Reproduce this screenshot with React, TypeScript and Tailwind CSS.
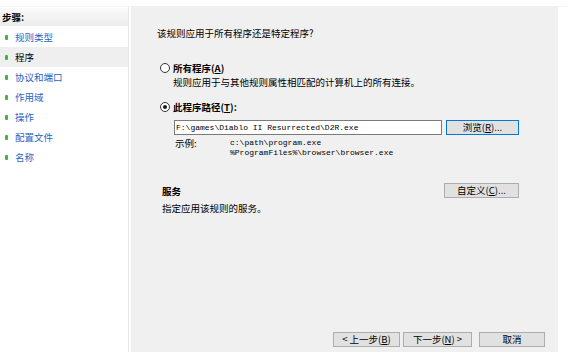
import React from "react";

const steps = ["规则类型", "程序", "协议和端口", "作用域", "操作", "配置文件", "名称"];

function Radio({ checked }: { checked?: boolean }) {
  return (
    <span className="w-[10px] h-[10px] rounded-full border border-[#333333] bg-white flex items-center justify-center shrink-0">
      {checked && <span className="w-[4px] h-[4px] rounded-full bg-[#1a1a1a]" />}
    </span>
  );
}

function Btn({ children, w, blue }: { children: React.ReactNode; w: string; blue?: boolean }) {
  return (
    <div
      className={`${w} h-[15px] flex items-center justify-center bg-[#e1e1e1] border ${
        blue ? "border-[#0078d7]" : "border-[#adadad]"
      } text-[9.5px] leading-[13px] text-black`}
    >
      {children}
    </div>
  );
}

export default function App() {
  return (
    <div className="w-[568px] h-[363px] bg-white text-black text-[9.5px] font-['Noto_Sans_CJK_SC','Noto_Sans',sans-serif] overflow-hidden">
      <div className="h-[7px] border-b border-[#f2f2f2]" />
      <div className="flex h-[345px]">
        {/* left steps panel */}
        <div className="w-[129px] border-r border-[#e6e6e6] bg-white flex flex-col pt-[1px]">
          <div className="h-[18px] flex items-center pl-[2px] font-bold bg-gradient-to-b from-[#fafafa] to-[#ececec]">
            步骤:
          </div>
          <div className="mt-[1px] flex flex-col">
            {steps.map((s, i) => (
              <div
                key={s}
                className={`h-[20px] flex items-center ${i === 1 ? "bg-[#efefef]" : ""}`}
              >
                <span className="ml-[5px] w-[3px] h-[5px] rounded-[1px] bg-[#44b33a]" />
                <span
                  className={`ml-[7px] leading-[12px] ${i === 1 ? "text-black" : "text-[#1f66c4]"}`}
                >
                  {s}
                </span>
              </div>
            ))}
          </div>
        </div>

        {/* main panel */}
        <div className="ml-[2px] w-[427px] h-[345px] bg-[#f0f0f0] flex flex-col pl-[26px]">
          <div className="mt-[20px] h-[12px] leading-[12px]">该规则应用于所有程序还是特定程序?</div>

          <div className="mt-[23px] h-[12px] flex items-center">
            <span className="ml-[3px]">
              <Radio />
            </span>
            <span className="ml-[3px] font-bold leading-[12px]">
              所有程序(<span className="underline">A</span>)
            </span>
          </div>
          <div className="mt-[2px] ml-[16px] h-[12px] leading-[12px]">
            规则应用于与其他规则属性相匹配的计算机上的所有连接。
          </div>

          <div className="mt-[13px] h-[12px] flex items-center">
            <span className="ml-[3px]">
              <Radio checked />
            </span>
            <span className="ml-[3px] font-bold leading-[12px]">
              此程序路径(<span className="underline">T</span>):
            </span>
          </div>

          <div className="mt-[7px] ml-[17px] flex items-center">
            <div className="w-[268px] h-[15px] bg-white border border-[#7a7a7a] flex items-center pl-[1px] font-['Liberation_Mono',monospace] text-[8px] leading-[10px] whitespace-pre">
              F:\games\Diablo II Resurrected\D2R.exe
            </div>
            <div className="ml-[4px]">
              <Btn w="w-[73px]" blue>
                浏览(<span className="underline">R</span>)...
              </Btn>
            </div>
          </div>

          <div className="mt-[3px] ml-[18px] flex">
            <div className="w-[55px] h-[10px] leading-[10px]">示例:</div>
            <div className="flex flex-col font-['Liberation_Mono',monospace] text-[8px] leading-[10px] whitespace-pre">
              <span>c:\path\program.exe</span>
              <span>%ProgramFiles%\browser\browser.exe</span>
            </div>
          </div>

          <div className="mt-[25px] ml-[5px] w-[357px] h-[15px] flex items-center justify-between">
            <span className="font-bold leading-[12px]">服务</span>
            <Btn w="w-[75px]">
              自定义(<span className="underline">C</span>)...
            </Btn>
          </div>
          <div className="mt-[4px] ml-[5px] h-[12px] leading-[12px]">指定应用该规则的服务。</div>

          <div className="flex-1" />

          <div className="mb-[5px] pr-[13px] flex justify-end items-center">
            <Btn w="w-[67px]">
              &lt; 上一步(<span className="underline">B</span>)
            </Btn>
            <div className="ml-[3px]">
              <Btn w="w-[69px]">
                下一步(<span className="underline">N</span>) &gt;
              </Btn>
            </div>
            <div className="ml-[7px]">
              <Btn w="w-[66px]">取消</Btn>
            </div>
          </div>
        </div>
      </div>
    </div>
  );
}
